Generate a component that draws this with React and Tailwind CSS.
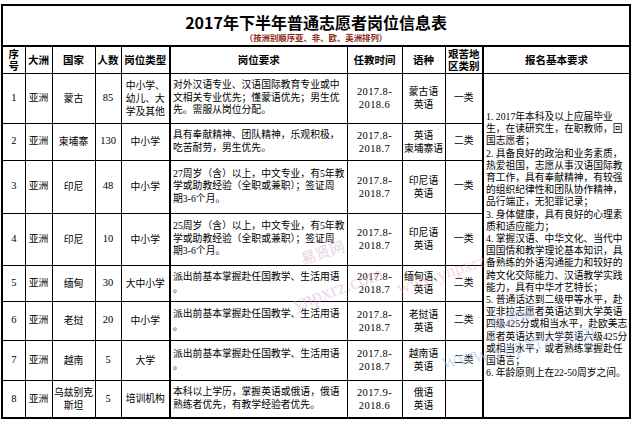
const rows = [
  {
    no: '1',
    country: ['蒙古'],
    num: '85',
    type: ['中小学、', '幼儿、大', '学及其他'],
    req: ['对外汉语专业、汉语国际教育专业或中', '文相关专业优先；懂蒙语优先；男生优', '先。需服从岗位分配。'],
    time: ['2017.8-', '2018.6'],
    lang: ['蒙古语', '英语'],
    level: '一类',
    h: 'h-[50px]',
  },
  {
    no: '2',
    country: ['柬埔寨'],
    num: '130',
    type: ['中小学'],
    req: ['具有奉献精神、团队精神，乐观积极，', '吃苦耐劳，男生优先。'],
    time: ['2017.8-', '2018.7'],
    lang: ['英语', '柬埔寨语'],
    level: '二类',
    h: 'h-[37px]',
  },
  {
    no: '3',
    country: ['印尼'],
    num: '48',
    type: ['中小学'],
    req: ['27周岁（含）以上，中文专业，有5年教', '学或助教经验（全职或兼职）；签证周', '期3-6个月。'],
    time: ['2017.8-', '2018.7'],
    lang: ['印尼语', '英语'],
    level: '一类',
    h: 'h-[53px]',
  },
  {
    no: '4',
    country: ['印尼'],
    num: '10',
    type: ['中小学'],
    req: ['25周岁（含）以上，中文专业，有5年教', '学或助教经验（全职或兼职）；签证周', '期3-6个月。'],
    time: ['2017.8-', '2018.7'],
    lang: ['印尼语', '英语'],
    level: '一类',
    h: 'h-[52px]',
  },
  {
    no: '5',
    country: ['缅甸'],
    num: '30',
    type: ['大中小学'],
    req: ['派出前基本掌握赴任国教学、生活用语', '。'],
    time: ['2017.8-', '2018.7'],
    lang: ['缅甸语、', '英语'],
    level: '二类',
    h: 'h-[36px]',
  },
  {
    no: '6',
    country: ['老挝'],
    num: '20',
    type: ['中小学'],
    req: ['派出前基本掌握赴任国教学、生活用语', '。'],
    time: ['2017.8-', '2018.7'],
    lang: ['老挝语', '英语'],
    level: '二类',
    h: 'h-[39px]',
  },
  {
    no: '7',
    country: ['越南'],
    num: '5',
    type: ['大学'],
    req: ['派出前基本掌握赴任国教学、生活用语', '。'],
    time: ['2017.8-', '2018.7'],
    lang: ['越南语', '英语'],
    level: '二类',
    h: 'h-[40px]',
  },
  {
    no: '8',
    country: ['乌兹别克', '斯坦'],
    num: '5',
    type: ['培训机构'],
    req: ['本科以上学历，掌握英语或俄语，俄语', '熟练者优先，有教学经验者优先。'],
    time: ['2017.9-', '2018.6'],
    lang: ['俄语', '英语'],
    level: '',
    h: 'h-[38px]',
  },
];

const basic = [
  '1. 2017年本科及以上应届毕业',
  '生，在读研究生，在职教师，回',
  '国志愿者；',
  '2. 具备良好的政治和业务素质，',
  '热爱祖国，志愿从事汉语国际教',
  '育工作，具有奉献精神，有较强',
  '的组织纪律性和团队协作精神，',
  '品行端正，无犯罪记录；',
  '3. 身体健康，具有良好的心理素',
  '质和适应能力；',
  '4. 掌握汉语、中华文化、当代中',
  '国国情和教学理论基本知识，具',
  '备熟练的外语沟通能力和较好的',
  '跨文化交际能力、汉语教学实践',
  '能力，具有中华才艺特长；',
  '5. 普通话达到二级甲等水平，赴',
  '亚非拉志愿者英语达到大学英语',
  '四级425分或相当水平，赴欧美志',
  '愿者英语达到大学英语六级425分',
  '或相当水平，或者熟练掌握赴任',
  '国语言；',
  '6. 年龄原则上在22-50周岁之间。',
];

const head = [['序', '号'], ['大洲'], ['国家'], ['人数'], ['岗位类型'], ['岗位要求'], ['任教时间'], ['语种'], ['艰苦地', '区类别'], ['报名基本要求']];

const cell = 'border border-black p-0 align-middle';

function Lines({ lines, className = '' }) {
  return (
    <div className={className}>
      {lines.map((l, i) => (
        <div key={i} className="whitespace-nowrap">
          {l}
        </div>
      ))}
    </div>
  );
}

export default function App() {
  return (
    <div className="relative h-[421px] w-[631px] overflow-hidden bg-white pl-[1px] pt-[4px] font-['Liberation_Serif','Noto_Sans_CJK_SC',serif] text-[9.8px] leading-[12.5px] text-black">
      <table className="w-[628px] table-fixed border-collapse border-2 border-black">
        <colgroup>
          <col className="w-[23px]" />
          <col className="w-[27px]" />
          <col className="w-[43px]" />
          <col className="w-[26px]" />
          <col className="w-[49px]" />
          <col className="w-[177px]" />
          <col className="w-[55px]" />
          <col className="w-[43px]" />
          <col className="w-[38px]" />
          <col className="w-[147px]" />
        </colgroup>
        <tbody>
          <tr className="h-[41px]">
            <td colSpan={10} className={`${cell} border-2 align-top pt-[7px] text-center`}>
              <div className="font-['Noto_Sans_CJK_SC',sans-serif] text-[16px] font-bold leading-[18px]">2017年下半年普通志愿者岗位信息表</div>
              <div className="mt-[1px] font-['Noto_Sans_CJK_SC',sans-serif] text-[8.4px] font-bold leading-[10px] text-[#8a2a12]">（按洲别顺序亚、非、欧、美洲排列）</div>
            </td>
          </tr>
          <tr className="h-[27px]">
            {head.map((h, i) => (
              <td key={i} className={`${cell} text-center font-['Noto_Sans_CJK_SC',sans-serif] text-[10.5px] font-bold leading-[12px] ${i === 5 || i === 9 ? 'border-l-2' : ''}`}>
                <Lines lines={h} />
              </td>
            ))}
          </tr>
          {rows.map((r, i) => (
            <tr key={r.no} className={r.h}>
              <td className={`${cell} text-center text-[10.5px]`}>{r.no}</td>
              <td className={`${cell} text-center`}>亚洲</td>
              <td className={`${cell} text-center`}>
                <Lines lines={r.country} className="leading-[13px]" />
              </td>
              <td className={`${cell} text-center text-[10.5px]`}>{r.num}</td>
              <td className={`${cell} text-center`}>
                <Lines lines={r.type} className="leading-[13px]" />
              </td>
              <td className={`${cell} border-l-2 pl-[2px]`}>
                <Lines lines={r.req} className="leading-[12.5px]" />
              </td>
              <td className={`${cell} text-center text-[10.5px] tracking-[0.4px]`}>
                <Lines lines={r.time} className="leading-[13px]" />
              </td>
              <td className={`${cell} text-center`}>
                <Lines lines={r.lang} className="leading-[13px]" />
              </td>
              <td className={`${cell} text-center`}>{r.level}</td>
              {i === 0 && (
                <td rowSpan={8} className={`${cell} border-l-2 pl-[2px] text-[9.75px] leading-[12.2px]`}>
                  <Lines lines={basic} />
                </td>
              )}
            </tr>
          ))}
        </tbody>
      </table>

      <div className="pointer-events-none absolute left-[300px] top-[246px] -rotate-[18deg] font-['Noto_Sans_CJK_SC',sans-serif] text-[15px] text-[#d9b8d8] opacity-60">易贤网</div>
      <div className="pointer-events-none absolute left-[290px] top-[282px] -rotate-[20deg] font-['Liberation_Serif',serif] text-[20px] text-[#e8a8d8] opacity-50">ynpxrz.com</div>
      <div className="pointer-events-none absolute left-[395px] top-[268px] -rotate-[18deg] font-['Liberation_Serif',serif] text-[18px] text-[#e8a0b8] opacity-40">www.ynpxrz</div>
      <div className="pointer-events-none absolute left-[490px] top-[312px] -rotate-[15deg] font-['Noto_Sans_CJK_SC',sans-serif] text-[15px] text-[#a8b8e8] opacity-50">易贤网</div>
      <div className="pointer-events-none absolute left-[440px] top-[340px] -rotate-[12deg] font-['Liberation_Serif',serif] text-[22px] text-[#a8c0f0] opacity-50">www.ynpxrz.com</div>
    </div>
  );
}
